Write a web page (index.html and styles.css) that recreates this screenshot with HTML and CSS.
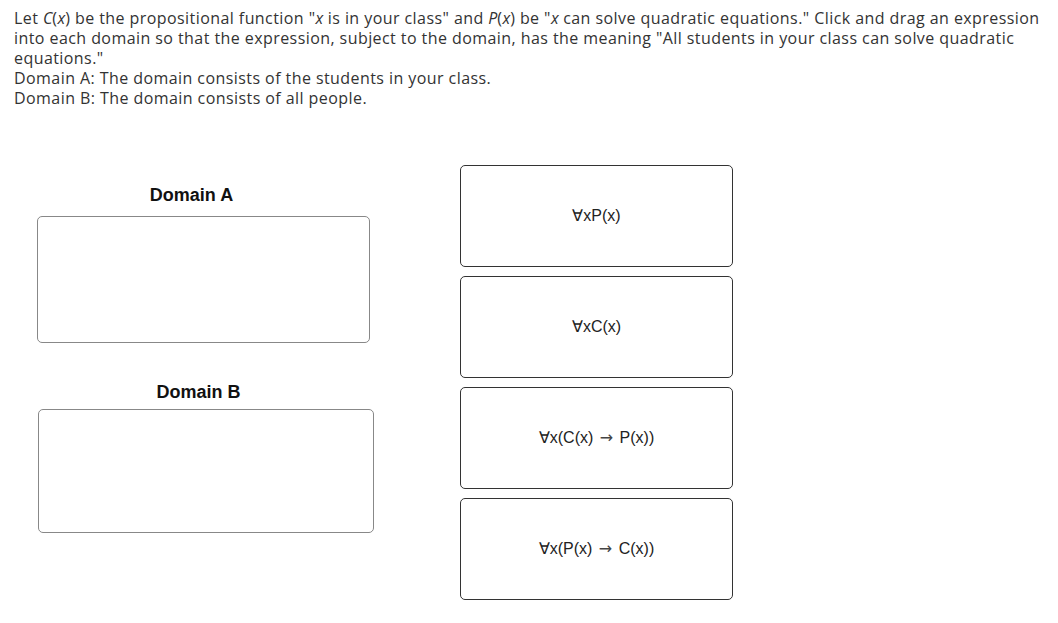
FILE: index.html
```html
<!DOCTYPE html>
<html lang="en">
<head>
  <meta charset="UTF-8">
  <title>Drag and Drop Quantifiers</title>
  <meta name="viewport" content="width=device-width, initial-scale=1.0">
  <link rel="stylesheet" href="styles.css">
</head>
<body>
<div id="question">
  <p class="prompt">Let <i>C</i>(<i>x</i>) be the propositional function "<i>x</i> is in your class" and <i>P</i>(<i>x</i>) be "<i>x</i> can solve quadratic equations." Click and drag an expression into each domain so that the expression, subject to the domain, has the meaning "All students in your class can solve quadratic equations."</p>
  <p class="prompt">Domain A: The domain consists of the students in your class.</p>
  <p class="prompt">Domain B: The domain consists of all people.</p>

  <div id="board">
    <div class="domains">
      <div class="domain domain-a">
        <div class="domain-label">Domain A</div>
        <div class="dropzone"></div>
      </div>
      <div class="domain domain-b">
        <div class="domain-label">Domain B</div>
        <div class="dropzone"></div>
      </div>
    </div>
    <div class="choices">
      <div class="choice" draggable="true"><span class="expr">∀xP(x)</span></div>
      <div class="choice" draggable="true"><span class="expr">∀xC(x)</span></div>
      <div class="choice" draggable="true"><span class="expr">∀x(C(x) <span class="arrow">→</span> P(x))</span></div>
      <div class="choice" draggable="true"><span class="expr">∀x(P(x) <span class="arrow">→</span> C(x))</span></div>
    </div>
  </div>
</div>
</body>
</html>
```

FILE: styles.css
```css
body, html {
  margin: 0;
  padding: 0;
  background: #fff;
}
#question {
  padding: 8px 8px 0 14px;
  font-family: 'Open Sans', sans-serif;
  color: #333;
}
.prompt {
  margin: 0;
  font-size: 16px;
  line-height: 20px;
  letter-spacing: 0.43px;
}
.prompt i {
  letter-spacing: 0;
}
#board {
  display: flex;
  margin-top: 57px;
}
.domains {
  display: flex;
  flex-direction: column;
  padding-top: 19px;
  margin-left: 23px;
}
.domain-label {
  font-family: 'Liberation Sans', sans-serif;
  font-weight: bold;
  font-size: 18px;
  line-height: 22px;
  color: #111;
  text-align: center;
}
.dropzone {
  border: 1px solid #888;
  border-radius: 5px;
  box-sizing: border-box;
}
.domain-a .domain-label {
  padding-right: 28px;
  margin-bottom: 10px;
}
.domain-a .dropzone {
  width: 333px;
  height: 127px;
}
.domain-b {
  margin-top: 38px;
  margin-left: 1px;
}
.domain-b .domain-label {
  padding-right: 15px;
  margin-bottom: 6px;
}
.domain-b .dropzone {
  width: 336px;
  height: 124px;
}
.choices {
  display: flex;
  flex-direction: column;
  gap: 9px;
  margin-left: 86px;
}
.choice {
  width: 273px;
  height: 102px;
  box-sizing: border-box;
  border: 1px solid #333;
  border-radius: 5px;
  display: flex;
  align-items: center;
  justify-content: center;
  font-family: 'Liberation Sans', sans-serif;
  font-size: 16px;
  line-height: 20px;
  color: #222;
  cursor: move;
}
.arrow {
  font-family: 'DejaVu Sans', sans-serif;
  font-size: 16px;
  line-height: 1;
  margin: 0 2px;
  color: #444;
}
```
